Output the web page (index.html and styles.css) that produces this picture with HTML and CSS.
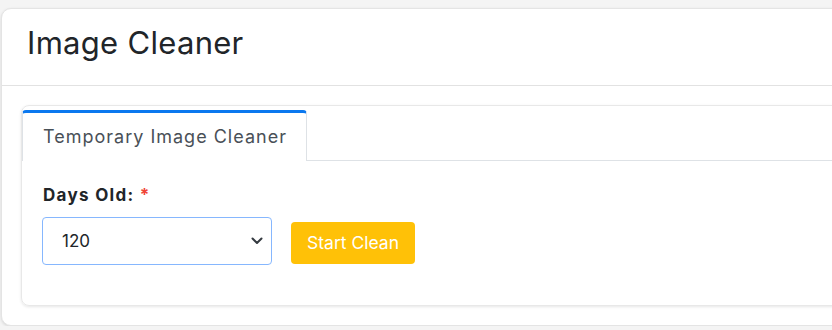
FILE: index.html
```html
<!DOCTYPE html>
<html>
<head>
<meta charset="utf-8">
<link rel="stylesheet" href="styles.css">
</head>
<body>
<div class="card">
  <div class="card-header">
    <h1 class="title">Image Cleaner</h1>
  </div>
  <div class="card-body">
    <div class="inner">
      <div class="tabs">
        <div class="tab active">Temporary Image Cleaner</div>
        <div class="tab-rest"></div>
      </div>
      <div class="pane">
        <label class="label">Days Old: <span class="req">*</span></label>
        <div class="row">
          <div class="select">
            <span class="value">120</span>
            <svg class="chev" width="12" height="8" viewBox="0 0 12 8"><path d="M1.5 1.5 L6 6 L10.5 1.5" fill="none" stroke="#343a40" stroke-width="2" stroke-linecap="round" stroke-linejoin="round"/></svg>
          </div>
          <button class="btn">Start Clean</button>
        </div>
      </div>
    </div>
  </div>
</div>
</body>
</html>
```

FILE: styles.css
```css
html, body {
  margin: 0;
  padding: 0;
  background: #f4f4f4;
  overflow: hidden;
  font-family: Inter, "Noto Sans", sans-serif;
}
.card {
  margin: 8px 0 0 1px;
  width: 900px;
  background: #fff;
  border: 1px solid #e4e4e4;
  border-radius: 10px;
  box-shadow: 0 1px 3px rgba(0,0,0,0.12);
}
.card-header {
  box-sizing: border-box;
  height: 77px;
  border-bottom: 1px solid #e2e2e2;
  display: flex;
  align-items: flex-start;
  padding: 15px 0 0 25px;
}
.title {
  margin: 0;
  font-size: 31px;
  line-height: 1.21;
  font-weight: 400;
  color: #212529;
  letter-spacing: 0.3px;
}
.card-body {
  padding: 19px 19px 19px 19px;
}
.inner {
  border: 1px solid #e8e8e8;
  border-radius: 8px;
  box-shadow: 0 1px 3px rgba(0,0,0,0.10);
  padding-top: 4px;
  padding-bottom: 40px;
}
.tabs {
  display: flex;
}
.tab {
  box-sizing: border-box;
  width: 285px;
  height: 51px;
  border: 1px solid #dee2e6;
  border-top: 3px solid #0b78ef;
  border-bottom: none;
  border-radius: 4px 4px 0 0;
  font-size: 18px;
  line-height: 22px;
  letter-spacing: 1px;
  color: #495057;
  padding-left: 20px;
  padding-top: 13px;
}
.tab-rest {
  flex: 1;
  border-bottom: 1px solid #dee2e6;
}
.pane {
  padding: 23px 20px 0 20px;
}
.label {
  display: block;
  font-size: 17px;
  line-height: 22px;
  font-weight: 700;
  letter-spacing: 1.3px;
  color: #212529;
  margin-left: 1px;
}
.req {
  color: #f04438;
}
.row {
  display: flex;
  align-items: center;
  gap: 19px;
  margin-top: 11px;
}
.select {
  box-sizing: border-box;
  width: 230px;
  height: 48px;
  border: 1px solid #86b7fe;
  border-radius: 4px;
  display: flex;
  align-items: center;
  justify-content: space-between;
  padding: 0 4px 0 19px;
}
.value {
  font-size: 17px;
  color: #212529;
}
.chev {
  margin-right: 4px;
}
.btn {
  box-sizing: border-box;
  width: 124px;
  height: 42px;
  margin-top: 3px;
  background: #ffc107;
  border: none;
  border-radius: 4px;
  color: #fff;
  font-family: Inter, "Noto Sans", sans-serif;
  font-size: 17.5px;
  padding: 0;
}
```
